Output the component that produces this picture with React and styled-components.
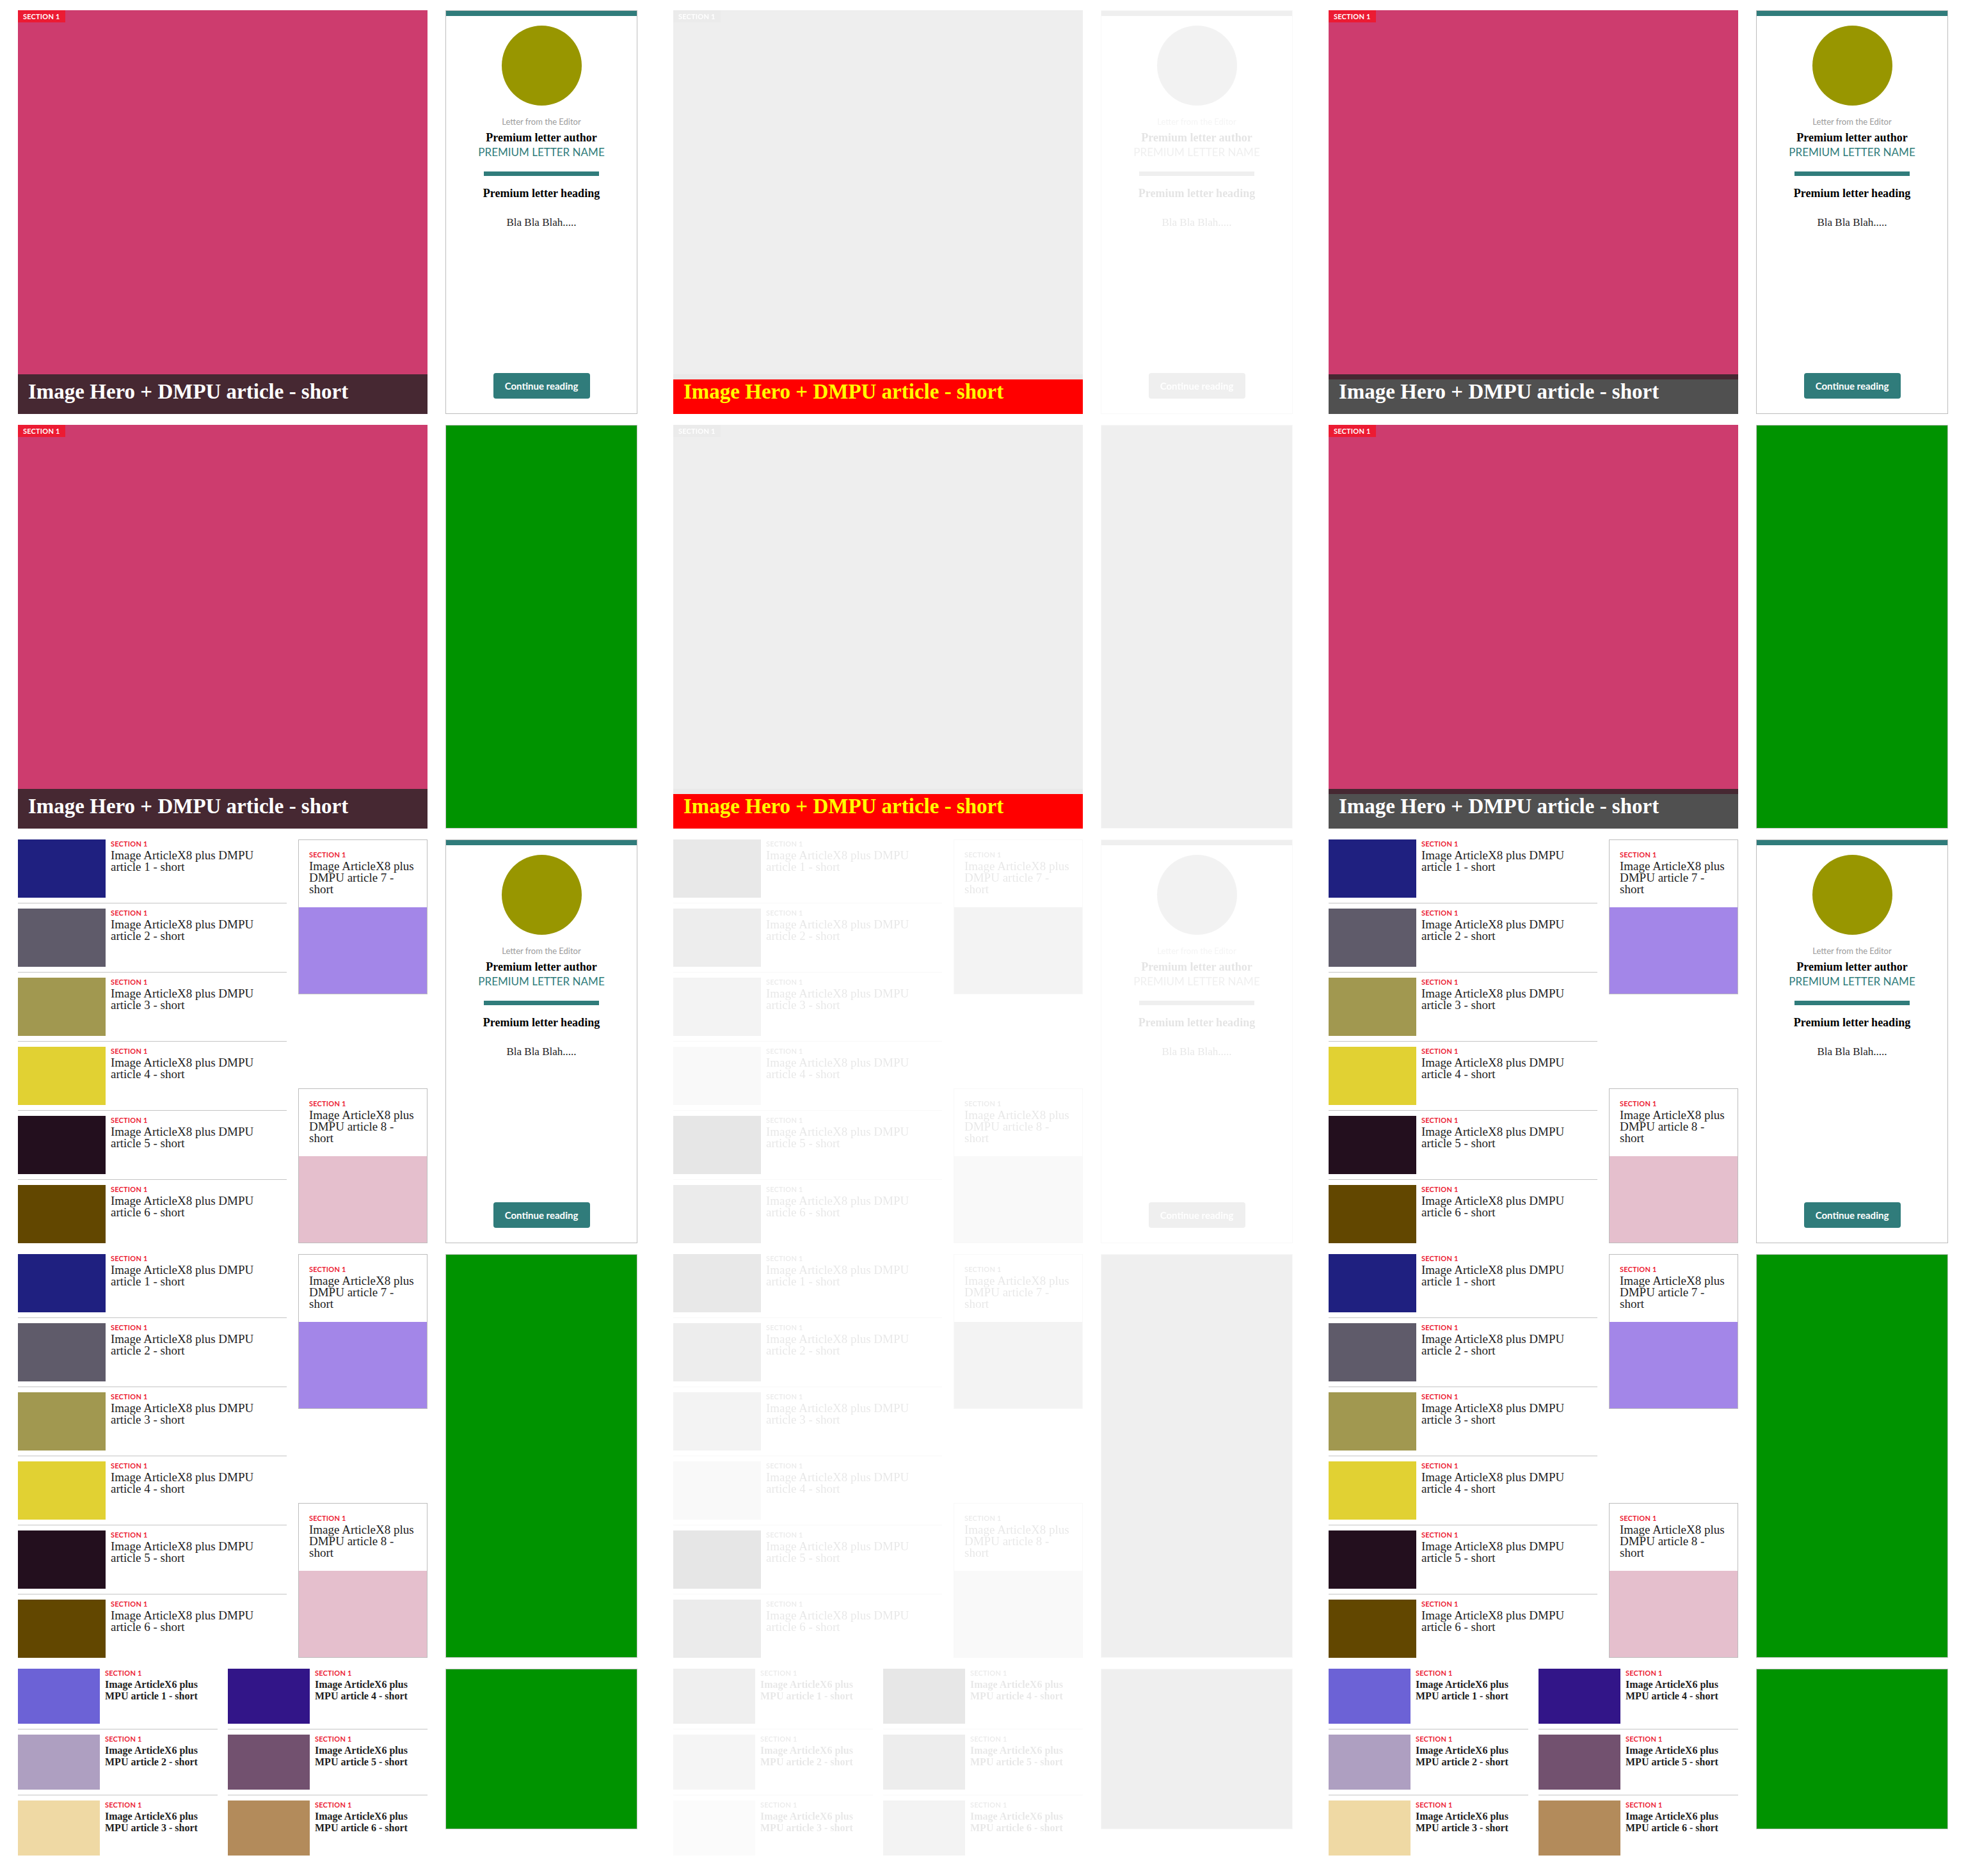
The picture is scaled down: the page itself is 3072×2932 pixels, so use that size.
import React from 'react';
import styled, { createGlobalStyle, css } from 'styled-components';

const TEAL = '#307c7b';
const RED = '#ec1b33';
const SERIF = '"Liberation Serif", "Times New Roman", serif';
const SANS = 'Lato, "Open Sans", sans-serif';

const GlobalStyle = createGlobalStyle`
  html, body { margin: 0; padding: 0; background: #fff; }
  body { font-family: ${SANS}; }
  *, *::before, *::after { box-sizing: border-box; }
`;

const fadedCss = css`
  filter: grayscale(1);
  opacity: 0.1;
`;

const Page = styled.main`
  display: flex;
  align-items: flex-start;
  gap: 56px;
  padding: 16px 28px 32px;
`;

const Layout = styled.section`
  display: grid;
  grid-template-columns: 640px 300px;
  column-gap: 28px;
  row-gap: 17px;
  align-items: start;
`;

/* ---------- Hero ---------- */
const HeroFrame = styled.article`
  position: relative;
  height: 631px;
`;

const HeroArt = styled.div`
  position: relative;
  height: 100%;
  background: ${(p) => p.$color};
  ${(p) => p.$faded && fadedCss}
`;

const SectionTag = styled.span`
  position: absolute;
  top: 0;
  left: 0;
  height: 19px;
  padding: 0 8px;
  background: ${RED};
  color: #fff;
  font: 700 11px/19px ${SANS};
  letter-spacing: 0.2px;
  text-transform: uppercase;
`;

const ShadeBar = styled.div`
  position: absolute;
  left: 0;
  right: 0;
  bottom: 0;
  height: 62px;
  background: #462832;
`;

const HeroCaption = styled.h2`
  position: absolute;
  left: 0;
  right: 0;
  bottom: 0;
  height: 54px;
  margin: 0;
  padding: 3px 16px 0;
  background: ${(p) => p.$bg};
  color: ${(p) => p.$color};
  font: 700 33px/33px ${SERIF};
  white-space: nowrap;
`;

/* ---------- Letter card ---------- */
const LetterCard = styled.aside`
  display: flex;
  flex-direction: column;
  align-items: center;
  height: 631px;
  border: 1px solid #bdbdbd;
  background: #fff;
  text-align: center;
  ${(p) => p.$faded && fadedCss}
`;

const TopBar = styled.div`
  align-self: stretch;
  height: 8px;
  background: ${TEAL};
`;

const Avatar = styled.div`
  width: 125px;
  height: 125px;
  margin-top: 15px;
  border-radius: 50%;
  background: #989600;
`;

const Kicker = styled.div`
  margin-top: 18px;
  font: 400 13px/15px ${SANS};
  color: #9b9b9b;
`;

const Author = styled.div`
  margin-top: 7px;
  font: 700 18px/20px ${SERIF};
  color: #000;
`;

const LetterName = styled.div`
  margin-top: 3px;
  font: 400 17px/20px ${SANS};
  color: ${TEAL};
  text-transform: uppercase;
`;

const Divider = styled.div`
  width: 180px;
  height: 7px;
  margin-top: 20px;
  background: ${TEAL};
`;

const LetterHeading = styled.div`
  margin-top: 17px;
  font: 700 18px/20px ${SERIF};
  color: #000;
`;

const LetterBody = styled.p`
  margin: 26px 0 0;
  font: 400 17px/20px ${SERIF};
  color: #222;
`;

const ContinueButton = styled.button`
  margin-top: auto;
  margin-bottom: 23px;
  width: 151px;
  height: 40px;
  border: 0;
  border-radius: 4px;
  background: ${TEAL};
  color: #fff;
  font: 700 15px/40px ${SANS};
  padding: 0;
`;

/* ---------- Ad slot ---------- */
const AdSlot = styled.div`
  height: ${(p) => p.$height}px;
  background: #009300;
  border: 1px solid #c6c6c6;
  ${(p) => p.$faded && fadedCss}
`;

/* ---------- Shared article text ---------- */
const Label = styled.div`
  font: 700 11px/13px ${SANS};
  color: ${RED};
  letter-spacing: 0.2px;
  text-transform: uppercase;
`;

const Title = styled.h3`
  margin: 3px 0 0;
  font: ${(p) => (p.$bold ? 700 : 400)} ${(p) => p.$size}px / 18px ${SERIF};
  color: #1e1e1e;
`;

const Thumb = styled.div`
  flex-shrink: 0;
  width: ${(p) => p.$w}px;
  height: ${(p) => p.$h}px;
  background: ${(p) => p.$color};
`;

/* ---------- ArticleX8 ---------- */
const X8Block = styled.div`
  display: grid;
  grid-template-columns: 420px 202px;
  column-gap: 18px;
  height: 631px;
  ${(p) => p.$faded && fadedCss}
`;

const ListColumn = styled.div`
  display: flex;
  flex-direction: column;
`;

const ListItem = styled.div`
  display: flex;
  gap: 8px;
  padding: 8px 0;
  border-bottom: 1px solid #c4c4c4;
  &:first-child { padding-top: 0; }
  &:last-child { padding-bottom: 0; border-bottom: 0; }
`;

const ItemText = styled.div`
  padding-right: ${(p) => p.$pr}px;
`;

const CardColumn = styled.div`
  display: flex;
  flex-direction: column;
  justify-content: space-between;
`;

const StackCard = styled.div`
  border: 1px solid #bdbdbd;
`;

const CardBody = styled.div`
  padding: 16px 14px 19px 16px;
`;

const CardImage = styled.div`
  height: 135px;
  background: ${(p) => p.$color};
`;

/* ---------- ArticleX6 ---------- */
const X6Block = styled.div`
  display: grid;
  grid-template-columns: 312px 312px;
  column-gap: 16px;
  ${(p) => p.$faded && fadedCss}
`;

/* ---------- Data ---------- */
const x8Colors = ['#1f2080', '#5f5b6a', '#a19850', '#e1d133', '#230f1e', '#624700'];
const x8Cards = [
  { n: 7, color: '#a386e8' },
  { n: 8, color: '#e5bfcd' },
];
const x6Cols = [
  [
    { n: 1, color: '#6c62d6' },
    { n: 2, color: '#ae9fc1' },
    { n: 3, color: '#efd9a4' },
  ],
  [
    { n: 4, color: '#321588' },
    { n: 5, color: '#72516f' },
    { n: 6, color: '#b38b5b' },
  ],
];

const variants = [
  { key: 'base', faded: false, captionBg: 'transparent', captionColor: '#fff' },
  { key: 'skeleton', faded: true, captionBg: '#ff0000', captionColor: '#ffff00' },
  { key: 'grey', faded: false, captionBg: '#505050', captionColor: '#fff' },
];

const x8Title = (n) => `Image ArticleX8 plus DMPU article ${n} - short`;
const x6Title = (n) => `Image ArticleX6 plus MPU article ${n} - short`;

/* ---------- Components ---------- */
function Hero({ v }) {
  return (
    <HeroFrame>
      <HeroArt $color="#cd3c6e" $faded={v.faded}>
        <SectionTag>Section 1</SectionTag>
        <ShadeBar />
      </HeroArt>
      <HeroCaption $bg={v.captionBg} $color={v.captionColor}>
        Image Hero + DMPU article - short
      </HeroCaption>
    </HeroFrame>
  );
}

function Letter({ v }) {
  return (
    <LetterCard $faded={v.faded}>
      <TopBar />
      <Avatar />
      <Kicker>Letter from the Editor</Kicker>
      <Author>Premium letter author</Author>
      <LetterName>Premium letter name</LetterName>
      <Divider />
      <LetterHeading>Premium letter heading</LetterHeading>
      <LetterBody>Bla Bla Blah.....</LetterBody>
      <ContinueButton>Continue reading</ContinueButton>
    </LetterCard>
  );
}

function ArticleX8({ v }) {
  return (
    <X8Block $faded={v.faded}>
      <ListColumn>
        {x8Colors.map((c, i) => (
          <ListItem key={i}>
            <Thumb $w={137} $h={91} $color={c} />
            <ItemText $pr={10}>
              <Label>Section 1</Label>
              <Title $size={19}>{x8Title(i + 1)}</Title>
            </ItemText>
          </ListItem>
        ))}
      </ListColumn>
      <CardColumn>
        {x8Cards.map((c) => (
          <StackCard key={c.n}>
            <CardBody>
              <Label>Section 1</Label>
              <Title $size={19}>{x8Title(c.n)}</Title>
            </CardBody>
            <CardImage $color={c.color} />
          </StackCard>
        ))}
      </CardColumn>
    </X8Block>
  );
}

function ArticleX6({ v }) {
  return (
    <X6Block $faded={v.faded}>
      {x6Cols.map((col, ci) => (
        <ListColumn key={ci}>
          {col.map((a) => (
            <ListItem key={a.n}>
              <Thumb $w={128} $h={86} $color={a.color} />
              <ItemText $pr={4}>
                <Label>Section 1</Label>
                <Title $size={16} $bold>
                  {x6Title(a.n)}
                </Title>
              </ItemText>
            </ListItem>
          ))}
        </ListColumn>
      ))}
    </X6Block>
  );
}

function PageLayout({ v }) {
  return (
    <Layout>
      <Hero v={v} />
      <Letter v={v} />
      <Hero v={v} />
      <AdSlot $height={631} $faded={v.faded} />
      <ArticleX8 v={v} />
      <Letter v={v} />
      <ArticleX8 v={v} />
      <AdSlot $height={631} $faded={v.faded} />
      <ArticleX6 v={v} />
      <AdSlot $height={251} $faded={v.faded} />
    </Layout>
  );
}

export default function App() {
  return (
    <>
      <GlobalStyle />
      <Page>
        {variants.map((v) => (
          <PageLayout key={v.key} v={v} />
        ))}
      </Page>
    </>
  );
}
